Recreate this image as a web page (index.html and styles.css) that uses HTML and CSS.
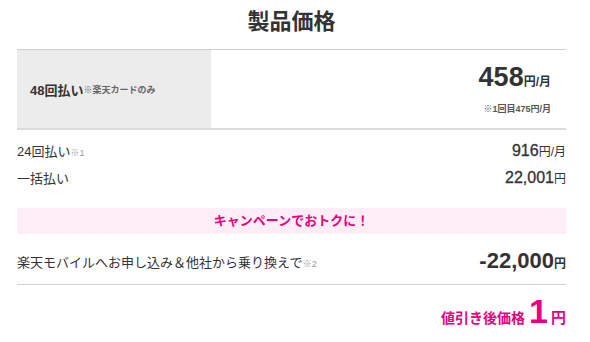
FILE: index.html
```html
<!DOCTYPE html>
<html lang="ja">
<head>
<meta charset="utf-8">
<link rel="stylesheet" href="styles.css">
</head>
<body>
<div class="price">
  <h2 class="title">製品価格</h2>
  <div class="main-row">
    <div class="main-label"><b>48回払い</b><span class="note">※楽天カードのみ</span></div>
    <div class="main-value">
      <div class="big"><span class="num">458</span><span class="unit">円/月</span></div>
      <div class="first">※1回目475円/月</div>
    </div>
  </div>
  <div class="rows">
    <div class="row"><span>24回払い<span class="note2">※1</span></span><span class="val"><span class="n">916</span><span class="u">円/月</span></span></div>
    <div class="row"><span>一括払い</span><span class="val"><span class="n">22,001</span><span class="u">円</span></span></div>
  </div>
  <div class="campaign">キャンペーンでおトクに！</div>
  <div class="discount">
    <span>楽天モバイルへお申し込み＆他社から乗り換えで<span class="note2">※2</span></span>
    <span class="dval"><span class="dn">-22,000</span><span class="du">円</span></span>
  </div>
  <div class="final"><span class="fl">値引き後価格</span><span class="fn">1</span><span class="fu">円</span></div>
</div>
</body>
</html>
```
FILE: styles.css
```css
body {
  margin: 0;
  background: #fff;
  font-family: "Liberation Sans", "Noto Sans CJK JP", sans-serif;
  color: #333;
}
.price {
  margin: 0 24px 0 17px;
}
.title {
  margin: 0;
  height: 49px;
  box-sizing: border-box;
  padding-top: 6px;
  text-align: center;
  font-size: 22px;
  line-height: 32px;
  font-weight: 700;
  color: #333;
}
.main-row {
  display: flex;
  border-top: 1px solid #cfcfcf;
  border-bottom: 2px solid #dcdcdc;
  height: 78px;
}
.main-label {
  width: 194px;
  background: #ececec;
  display: flex;
  align-items: center;
  padding-left: 13px;
  box-sizing: border-box;
  font-size: 13px;
}
.main-label b { font-weight: 700; }
.note {
  font-size: 9px;
  color: #666;
  font-weight: 700;
}
.main-value {
  flex: 1;
  text-align: right;
  padding-right: 15px;
  padding-top: 12px;
}
.big { line-height: 30px; }
.num { font-size: 27px; font-weight: 700; }
.unit { font-size: 12px; font-weight: 700; }
.first {
  font-size: 9px;
  font-weight: 700;
  color: #555;
  margin-top: 5px;
}
.rows { padding-top: 10px; }
.row {
  display: flex;
  justify-content: space-between;
  align-items: baseline;
  font-size: 13px;
  height: 27px;
  line-height: 22px;
}
.note2 { font-size: 9px; color: #999; }
.val .n { font-size: 16px; -webkit-text-stroke: 0.3px #333; }
.val .u { font-size: 12px; }
.campaign {
  margin-top: 14px;
  background: #fdeef6;
  color: #e8007f;
  text-align: center;
  font-weight: 700;
  font-size: 13px;
  height: 26px;
  line-height: 26px;
}
.discount {
  display: flex;
  justify-content: space-between;
  align-items: center;
  height: 51px;
  box-sizing: border-box;
  padding-top: 4px;
  font-size: 13px;
  border-bottom: 1px solid #cfcfcf;
}
.dn { font-size: 22px; font-weight: 700; }
.du { font-size: 12px; font-weight: 700; }
.final {
  text-align: right;
  color: #e8007f;
  font-weight: 700;
  padding-top: 6px;
  line-height: 40px;
}
.fl { font-size: 14px; }
.fn { font-size: 34px; margin: 0 3px 0 4px; }
.fu { font-size: 15px; }
```
